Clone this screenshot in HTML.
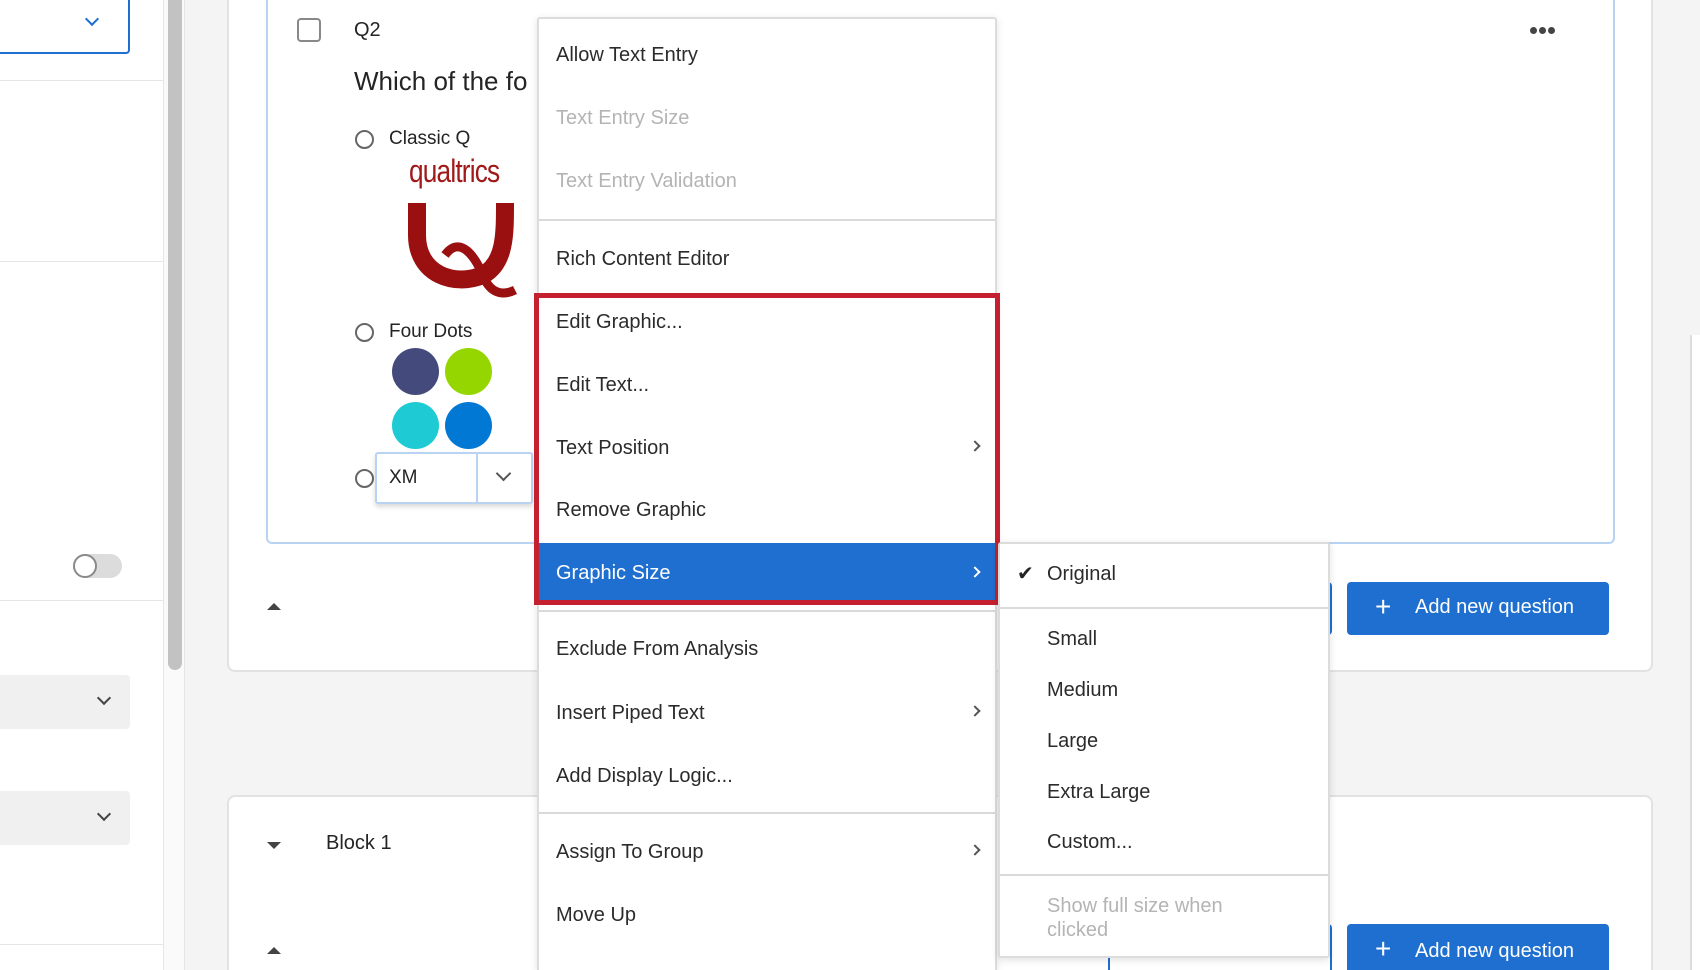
<!DOCTYPE html>
<html style="overflow:hidden;width:1700px;height:970px"><head><meta charset="utf-8"><style>
*{box-sizing:border-box;margin:0;padding:0}
body{width:1700px;height:970px;overflow:hidden;background:#f4f4f4;font-family:"Liberation Sans",sans-serif;color:#242424;position:relative}
.a{position:absolute}
.t{position:absolute;white-space:nowrap}
.mi{position:absolute;left:17px;font-size:20px;color:#2b2b2b;line-height:24px}
.dis{color:#b4b4b4}
.hr{position:absolute;left:0;right:0;height:2px;background:#dadada}
.chev{position:absolute;width:10px;height:10px;border-right:2px solid #555;border-top:2px solid #555;transform:rotate(45deg)}
.btn{position:absolute;background:#1e6fd0;border-radius:4px;color:#fff;font-size:20px}
</style></head><body>
<div class="a" style="left:0;top:0;width:163px;height:970px;background:#fff"></div>
<div class="a" style="left:0;top:-4px;width:130px;height:58px;border:2px solid #1e6fd0;border-left:none;border-radius:0 0 4px 0;background:#fff"></div>
<div class="a" style="left:87px;top:14px;width:10px;height:10px;border-right:2px solid #1e6fd0;border-bottom:2px solid #1e6fd0;transform:rotate(45deg)"></div>
<div class="a" style="left:0;top:80px;width:163px;height:1px;background:#e6e6e6"></div>
<div class="a" style="left:0;top:261px;width:163px;height:1px;background:#e6e6e6"></div>
<div class="a" style="left:73px;top:554px;width:49px;height:24px;border-radius:12px;background:#dcdcdc"></div>
<div class="a" style="left:73px;top:554px;width:24px;height:24px;border-radius:12px;background:#fff;border:2px solid #8a8a8a"></div>
<div class="a" style="left:0;top:600px;width:163px;height:1px;background:#e6e6e6"></div>
<div class="a" style="left:0;top:675px;width:130px;height:54px;background:#f0f0f0;border-radius:0 4px 4px 0"></div>
<div class="a" style="left:99px;top:693px;width:10px;height:10px;border-right:2px solid #444;border-bottom:2px solid #444;transform:rotate(45deg)"></div>
<div class="a" style="left:0;top:791px;width:130px;height:54px;background:#f0f0f0;border-radius:0 4px 4px 0"></div>
<div class="a" style="left:99px;top:809px;width:10px;height:10px;border-right:2px solid #444;border-bottom:2px solid #444;transform:rotate(45deg)"></div>
<div class="a" style="left:0;top:944px;width:163px;height:1px;background:#e6e6e6"></div>
<div class="a" style="left:163px;top:0;width:22px;height:970px;background:#fafafa;border-left:1px solid #e6e6e6;border-right:1px solid #e6e6e6"></div>
<div class="a" style="left:168px;top:0;width:14px;height:670px;background:#c2c2c2;border-radius:0 0 7px 7px"></div>
<div class="a" style="left:1690px;top:335px;width:10px;height:635px;background:#fff;border-left:2px solid #ddd"></div>
<div class="a" style="left:227px;top:-10px;width:1426px;height:682px;background:#fff;border:2px solid #e2e2e2;border-radius:8px"></div>
<div class="a" style="left:266px;top:-10px;width:1349px;height:554px;background:#fff;border:2px solid #b9d3f2;border-radius:6px"></div>
<div class="a" style="left:297px;top:18px;width:24px;height:24px;border:2px solid #888;border-radius:4px"></div>
<div class="t" style="left:354px;top:19px;font-size:20px">Q2</div>
<div class="t" style="left:354px;top:66px;font-size:26px">Which of the fo</div>
<div class="a" style="left:355px;top:130px;width:19px;height:19px;border:2px solid #666;border-radius:50%"></div>
<div class="t" style="left:389px;top:128px;font-size:19px">Classic Q</div>
<div class="t" style="left:409px;top:153px;font-size:32px;color:#a01a1a;transform:scaleX(.82);transform-origin:0 0;letter-spacing:-1px">qualtrics</div>
<svg class="a" style="left:405px;top:195px" width="120" height="110" viewBox="0 0 120 110"><path d="M12 8 L12 40 C12 80 50 92 78 80 C100 68 100 40 100 8" fill="none" stroke="#9a0f0f" stroke-width="18"/><path d="M40 60 C55 40 70 60 80 85 C88 100 100 100 110 95" fill="none" stroke="#9a0f0f" stroke-width="9"/></svg>
<div class="a" style="left:355px;top:323px;width:19px;height:19px;border:2px solid #666;border-radius:50%"></div>
<div class="t" style="left:389px;top:321px;font-size:19px">Four Dots</div>
<div class="a" style="left:392px;top:348px;width:47px;height:47px;border-radius:50%;background:#444a7b"></div>
<div class="a" style="left:445px;top:348px;width:47px;height:47px;border-radius:50%;background:#96d600"></div>
<div class="a" style="left:392px;top:402px;width:47px;height:47px;border-radius:50%;background:#1ecad3"></div>
<div class="a" style="left:445px;top:402px;width:47px;height:47px;border-radius:50%;background:#0078d4"></div>
<div class="a" style="left:355px;top:469px;width:19px;height:19px;border:2px solid #666;border-radius:50%"></div>
<div class="a" style="left:375px;top:452px;width:158px;height:52px;background:#fff;border:2px solid #b9d3f2;border-radius:3px;box-shadow:0 3px 5px rgba(0,0,0,.15)"></div>
<div class="a" style="left:476px;top:452px;width:2px;height:52px;background:#b9d3f2"></div>
<div class="t" style="left:389px;top:467px;font-size:19px">XM</div>
<div class="a" style="left:498px;top:468px;width:11px;height:11px;border-right:2px solid #555;border-bottom:2px solid #555;transform:rotate(45deg)"></div>
<div class="a" style="left:1530px;top:27px;width:7px;height:7px;border-radius:50%;background:#444"></div>
<div class="a" style="left:1539px;top:27px;width:7px;height:7px;border-radius:50%;background:#444"></div>
<div class="a" style="left:1548px;top:27px;width:7px;height:7px;border-radius:50%;background:#444"></div>
<div class="a" style="left:267px;top:603px;border-left:7px solid transparent;border-right:7px solid transparent;border-bottom:7px solid #444"></div>
<div class="a" style="left:1200px;top:582px;width:132px;height:53px;border:2px solid #1e6fd0;border-radius:4px"></div>
<div class="btn" style="left:1347px;top:582px;width:262px;height:53px"><span class="t" style="left:28px;top:9px;font-size:28px;font-weight:200">+</span><span class="t" style="left:68px;top:14px">Add new question</span></div>
<div class="a" style="left:227px;top:795px;width:1426px;height:175px;background:#fff;border:2px solid #e2e2e2;border-bottom:none;border-radius:8px 8px 0 0"></div>
<div class="a" style="left:267px;top:842px;border-left:7px solid transparent;border-right:7px solid transparent;border-top:7px solid #444"></div>
<div class="t" style="left:326px;top:832px;font-size:20px">Block 1</div>
<div class="a" style="left:267px;top:947px;border-left:7px solid transparent;border-right:7px solid transparent;border-bottom:7px solid #444"></div>
<div class="a" style="left:1108px;top:924px;width:224px;height:46px;border:2px solid #1e6fd0;border-bottom:none;border-radius:4px 4px 0 0"></div>
<div class="btn" style="left:1347px;top:924px;width:262px;height:46px;border-radius:4px 4px 0 0"><span class="t" style="left:28px;top:9px;font-size:28px;font-weight:200">+</span><span class="t" style="left:68px;top:16px">Add new question</span></div>
<div class="a" style="left:537px;top:17px;width:460px;height:953px;background:#fff;border:2px solid #dcdcdc;border-bottom:none;border-radius:3px 3px 0 0;box-shadow:0 2px 8px rgba(0,0,0,.12);overflow:hidden">
<div class="mi" style="top:24px">Allow Text Entry</div>
<div class="mi dis" style="top:87px">Text Entry Size</div>
<div class="mi dis" style="top:150px">Text Entry Validation</div>
<div class="hr" style="top:200px"></div>
<div class="mi" style="top:228px">Rich Content Editor</div>
<div class="mi" style="top:291px">Edit Graphic...</div>
<div class="mi" style="top:354px">Edit Text...</div>
<div class="mi" style="top:417px">Text Position</div><div class="chev" style="left:432px;top:423px;width:8px;height:8px"></div>
<div class="mi" style="top:479px">Remove Graphic</div>
<div class="a" style="left:0;right:0;top:524px;height:61px;background:#1e6fd0"></div>
<div class="mi" style="top:542px;color:#fff">Graphic Size</div><div class="chev" style="left:432px;top:549px;width:8px;height:8px;border-color:#fff"></div>
<div class="hr" style="top:591px"></div>
<div class="mi" style="top:618px">Exclude From Analysis</div>
<div class="mi" style="top:682px">Insert Piped Text</div><div class="chev" style="left:432px;top:688px;width:8px;height:8px"></div>
<div class="mi" style="top:745px">Add Display Logic...</div>
<div class="hr" style="top:793px"></div>
<div class="mi" style="top:821px">Assign To Group</div><div class="chev" style="left:432px;top:827px;width:8px;height:8px"></div>
<div class="mi" style="top:884px">Move Up</div>
<div class="mi" style="top:947px">Move Down</div>
</div>
<div class="a" style="left:534px;top:293px;width:466px;height:312px;border:5px solid #c4202f"></div>
<div class="a" style="left:998px;top:542px;width:332px;height:416px;background:#fff;border:2px solid #dcdcdc;border-radius:3px;box-shadow:0 2px 8px rgba(0,0,0,.12)">
<div class="t" style="left:17px;top:17px;font-size:20px">✔</div>
<div class="mi" style="left:47px;top:18px">Original</div>
<div class="hr" style="top:63px"></div>
<div class="mi" style="left:47px;top:83px">Small</div>
<div class="mi" style="left:47px;top:134px">Medium</div>
<div class="mi" style="left:47px;top:185px">Large</div>
<div class="mi" style="left:47px;top:236px">Extra Large</div>
<div class="mi" style="left:47px;top:286px">Custom...</div>
<div class="hr" style="top:330px"></div>
<div class="mi dis" style="left:47px;top:350px">Show full size when</div>
<div class="mi dis" style="left:47px;top:374px">clicked</div>
</div>
</body></html>
